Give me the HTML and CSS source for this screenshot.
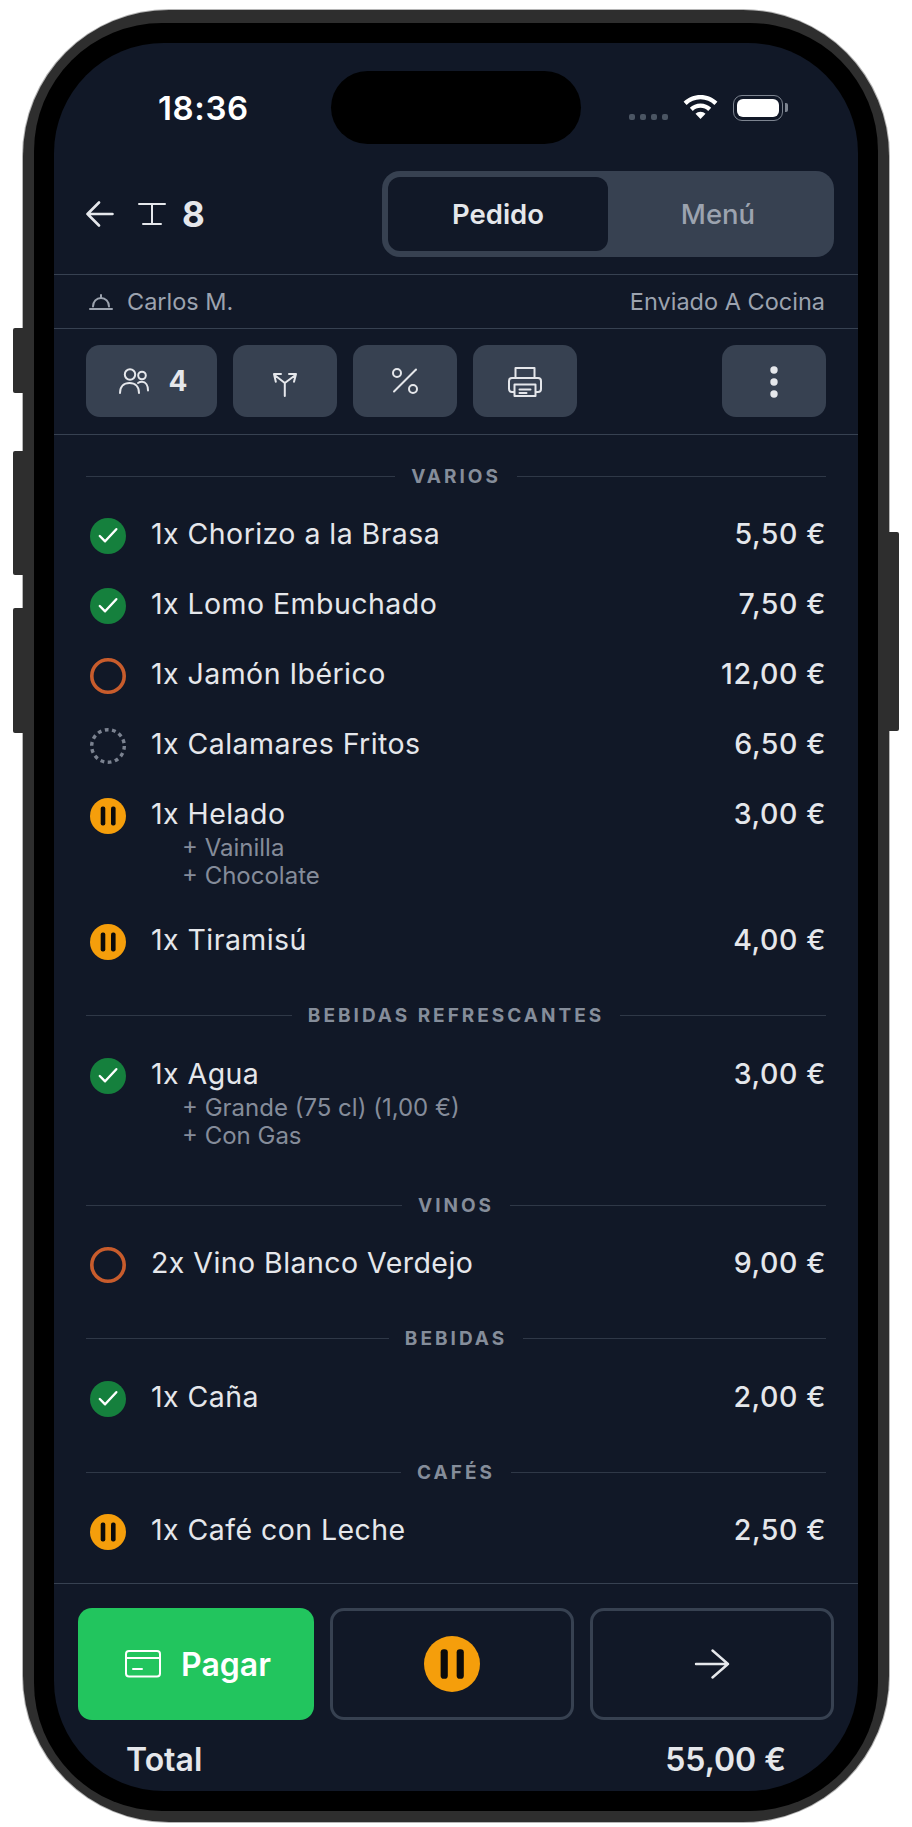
FILE: index.html
```html
<!DOCTYPE html>
<html lang="es">
<head>
    <meta charset="UTF-8">
    <title>Pedido mesa 8</title>
    <link rel="stylesheet" href="styles.css">
</head>
<body>

	<svg class="defs" width="0" height="0">
		<symbol id="st-done" viewBox="0 0 36 36">
			<circle cx="18" cy="18" r="18" fill="#15803d"/>
			<path d="M9.800 18l5.300 5.300L26.300 11.200" fill="none" stroke="#fff" stroke-width="2.400" stroke-linecap="round" stroke-linejoin="round"/>
		</symbol>
		<symbol id="st-sent" viewBox="0 0 36 36">
			<circle cx="18" cy="18" r="16.200" fill="none" stroke="#c85c2c" stroke-width="3.600"/>
		</symbol>
		<symbol id="st-wait" viewBox="0 0 36 36">
			<circle cx="18" cy="18" r="16.300" fill="none" stroke="#7b8290" stroke-width="3.400" stroke-dasharray="3.800 3.510"/>
		</symbol>
		<symbol id="st-hold" viewBox="0 0 36 36">
			<circle cx="18" cy="18" r="18" fill="#f59e0b"/>
			<rect x="10.700" y="8.500" width="4.600" height="19" rx="2" fill="#0b0b0b"/>
			<rect x="21" y="8.500" width="4.600" height="19" rx="2" fill="#0b0b0b"/>
		</symbol>
	</svg>

	<div class="phone">
		<span class="side-btn left b1"></span>
		<span class="side-btn left b2"></span>
		<span class="side-btn left b3"></span>
		<span class="side-btn right b4"></span>

		<div class="bezel">
		<div class="screen">
			<div class="island"></div>

			<div class="statusbar">
				<span class="time">18:36</span>
				<span class="status-icons">
					<span class="signal"><i></i><i></i><i></i><i></i></span>
					<svg class="wifi" width="35" height="26" viewBox="0 0 35 26">
						<path d="M17.500 0C11 0 5 2.500.6 6.700l3 3.200C7.200 6.400 12.100 4.300 17.500 4.300s10.300 2.100 13.900 5.600l3-3.200C30 2.500 24 0 17.500 0z" fill="#fff"/>
						<path d="M17.500 8.400c-4.100 0-7.900 1.600-10.700 4.300l3 3.200c2-1.900 4.700-3.100 7.700-3.100s5.700 1.200 7.700 3.100l3-3.200c-2.800-2.700-6.600-4.300-10.700-4.300z" fill="#fff"/>
						<path d="M17.500 16.800c-2 0-3.700.8-5 2l5 5.200 5-5.200c-1.300-1.200-3-2-5-2z" fill="#fff"/>
					</svg>
					<span class="battery"><i></i></span>
				</span>
			</div>

			<div class="topbar">
				<div class="table-info">
					<svg width="28" height="26" viewBox="0 0 28 26" class="ico">
						<path d="M1.500 13h25M13 1.500L1.500 13 13 24.500"/>
					</svg>
					<svg width="28" height="24" viewBox="0 0 28 24" class="ico thin table-ico">
						<path d="M1 2h26M14 2v20M5 22h18"/>
					</svg>
					<span class="table-no">8</span>
				</div>
				<div class="tabs">
					<div class="tab active">Pedido</div>
					<div class="tab">Menú</div>
				</div>
			</div>

			<div class="infobar">
				<span class="waiter">
					<svg width="24" height="16" viewBox="0 0 24 16" class="ico thin dim">
						<path d="M1 15h22M4 12.500C4 7.500 7.500 4 12 4s8 3.500 8 8.500M12 1v3"/>
					</svg>
					Carlos M.
				</span>
				<span>Enviado A Cocina</span>
			</div>

			<div class="toolbar">
				<button class="tool wide" type="button">
					<svg width="30" height="26" viewBox="0 0 30 26" class="ico thin">
						<circle cx="11" cy="6.500" r="5.200"/>
						<circle cx="23" cy="7.500" r="3.800"/>
						<path d="M1 25c0-6.500 4-10 9.500-10s9.500 3.500 9.500 10M19 15c1.200-.8 2.500-1.200 4-1.200 3.800 0 6 3.800 6 8.700"/>
					</svg>
					<span>4</span>
				</button>
				<button class="tool" type="button">
					<svg width="24" height="24" viewBox="0 0 24 24" class="ico thin fork">
						<path d="M11.800 23V10L1.500 2M11.800 10L22.500 2M8 1H1l1.800 7.700M16 1h7l-2 7.700"/>
					</svg>
				</button>
				<button class="tool" type="button">
					<svg width="28" height="28" viewBox="0 0 28 28" class="ico thin">
						<path d="M25 2.500L3 24.500"/>
						<circle cx="6" cy="6" r="4"/>
						<circle cx="22" cy="22" r="4"/>
					</svg>
				</button>
				<button class="tool" type="button">
					<svg width="34" height="30" viewBox="0 0 34 30" class="ico thin nudge">
						<path d="M7.500 11V1h19v10M6 25H4a3 3 0 0 1-3-3V14a3 3 0 0 1 3-3h26a3 3 0 0 1 3 3v8a3 3 0 0 1-3 3h-2"/>
						<path d="M6.500 17.500h21V29h-21zM11.500 22.500h11M11.500 26h7"/>
					</svg>
				</button>
				<button class="tool push" type="button">
					<svg width="8" height="32" viewBox="0 0 8 32" class="dots nudge">
						<circle cx="4" cy="4" r="3.700"/>
						<circle cx="4" cy="16" r="3.700"/>
						<circle cx="4" cy="28" r="3.700"/>
					</svg>
				</button>
			</div>

			<div class="order">
				<div class="section"><span>Varios</span></div>
				<div class="row"><svg class="state"><use href="#st-done"/></svg><div class="name">1x Chorizo a la Brasa</div><div class="price">5,50 €</div></div>
				<div class="row"><svg class="state"><use href="#st-done"/></svg><div class="name">1x Lomo Embuchado</div><div class="price">7,50 €</div></div>
				<div class="row"><svg class="state"><use href="#st-sent"/></svg><div class="name">1x Jamón Ibérico</div><div class="price">12,00 €</div></div>
				<div class="row"><svg class="state"><use href="#st-wait"/></svg><div class="name">1x Calamares Fritos</div><div class="price">6,50 €</div></div>
				<div class="row">
					<svg class="state"><use href="#st-hold"/></svg>
					<div class="name">1x Helado
						<div class="extras"><div>+ Vainilla</div><div>+ Chocolate</div></div>
					</div>
					<div class="price">3,00 €</div>
				</div>
				<div class="row"><svg class="state"><use href="#st-hold"/></svg><div class="name">1x Tiramisú</div><div class="price">4,00 €</div></div>

				<div class="section"><span>Bebidas Refrescantes</span></div>
				<div class="row">
					<svg class="state"><use href="#st-done"/></svg>
					<div class="name">1x Agua
						<div class="extras"><div>+ Grande (75 cl) (1,00 €)</div><div>+ Con Gas</div></div>
					</div>
					<div class="price">3,00 €</div>
				</div>

				<div class="section"><span>Vinos</span></div>
				<div class="row"><svg class="state"><use href="#st-sent"/></svg><div class="name">2x Vino Blanco Verdejo</div><div class="price">9,00 €</div></div>

				<div class="section"><span>Bebidas</span></div>
				<div class="row"><svg class="state"><use href="#st-done"/></svg><div class="name">1x Caña</div><div class="price">2,00 €</div></div>

				<div class="section"><span>Cafés</span></div>
				<div class="row"><svg class="state"><use href="#st-hold"/></svg><div class="name">1x Café con Leche</div><div class="price">2,50 €</div></div>
			</div>

			<div class="footer">
				<div class="actions">
					<button class="pay" type="button">
						<svg width="36" height="28" viewBox="0 0 36 28" class="ico thin white">
							<rect x="1" y="1" width="34" height="25.500" rx="3"/>
							<path d="M1 8h34M8 19h9"/>
						</svg>
						Pagar
					</button>
					<button class="ghost" type="button">
						<svg width="56" height="56" viewBox="0 0 36 36"><use href="#st-hold"/></svg>
					</button>
					<button class="ghost" type="button">
						<svg width="36" height="30" viewBox="0 0 36 30" class="ico light">
							<path d="M2 15h32M18.500 1.500L34 15 18.500 28.500"/>
						</svg>
					</button>
				</div>
				<div class="total"><span>Total</span><span>55,00 €</span></div>
			</div>
		</div>
		</div>
	</div>

</body>
</html>
```

FILE: styles.css
```css
:root {
	--bg: #111827;
	--line: #374151;
	--text: #e5e7eb;
	--muted: #9ca3af;
}
* {
	box-sizing: border-box;
}
body {
	margin: 0;
	padding: 10px 23px 5px;
	background: #fff;
	font-family: Inter, "Noto Sans", sans-serif;
	color: var(--text);
}
.defs {
	position: absolute;
}
.phone {
	position: relative;
	width: 866px;
	height: 1812px;
	padding: 13px 11px 11px;
	background: #2e2e2e;
	border-radius: 146px;
	box-shadow: 0 0 0 1px #b5b5b5;
}
.side-btn {
	position: absolute;
	width: 10px;
	background: #2e2e2e;
}
.side-btn.left {
	left: -10px;
	border-radius: 2px 0 0 2px;
}
.side-btn.right {
	right: -10px;
	border-radius: 0 2px 2px 0;
}
.b1 { top: 318px; height: 65px; }
.b2 { top: 441px; height: 124px; }
.b3 { top: 598px; height: 125px; }
.b4 { top: 522px; height: 199px; }

.bezel {
	height: 100%;
	padding: 20px;
	background: #000;
	border-radius: 128px;
}
.screen {
	position: relative;
	display: flex;
	flex-direction: column;
	height: 100%;
	background: var(--bg);
	border-radius: 110px;
	overflow: hidden;
}
.screen > div {
	flex: none;
}
.island {
	position: absolute;
	top: 28px;
	left: 277px;
	width: 250px;
	height: 73px;
	background: #000;
	border-radius: 37px;
}

.statusbar {
	display: flex;
	justify-content: space-between;
	align-items: flex-start;
	height: 128px;
	padding: 45px 75px 0 104px;
	color: #fff;
}
.time {
	font-size: 33px;
	font-weight: 600;
	line-height: 40px;
	letter-spacing: 0.6px;
}
.status-icons {
	display: flex;
	align-items: flex-start;
	padding-top: 7px;
}
.signal {
	display: flex;
	gap: 5px;
	margin: 19px 15px 0 0;
}
.signal i {
	width: 6px;
	height: 6px;
	border-radius: 2px;
	background: #4b5563;
}
.battery {
	position: relative;
	width: 50px;
	height: 26px;
	margin-left: 15px;
	padding: 3px;
	border: 1.500px solid #7d8490;
	border-radius: 9px;
}
.battery i {
	display: block;
	height: 100%;
	background: #fff;
	border-radius: 6px;
}
.battery::after {
	content: "";
	position: absolute;
	right: -6px;
	top: 7px;
	width: 3px;
	height: 9px;
	background: #7d8490;
	border-radius: 0 2px 2px 0;
}

.ico {
	fill: none;
	stroke: var(--text);
	stroke-width: 2.600;
	stroke-linecap: round;
	stroke-linejoin: round;
}
.ico.thin {
	stroke-width: 2;
}
.ico.dim {
	stroke: var(--muted);
}
.ico.white {
	stroke: #fff;
}
.ico.light {
	stroke-width: 2.400;
}
.fork {
	margin-top: 7px;
}
.nudge {
	margin-top: 2px;
}

.topbar {
	display: flex;
	justify-content: space-between;
	align-items: flex-start;
	height: 104px;
	padding: 0 24px 0 32px;
	border-bottom: 1px solid var(--line);
}
.table-info {
	display: flex;
	align-items: center;
	height: 86px;
}
.table-ico {
	margin-left: 24px;
}
.table-no {
	margin-left: 16px;
	font-size: 35px;
	font-weight: 700;
}
.tabs {
	display: grid;
	grid-template-columns: 220px 220px;
	width: 452px;
	height: 86px;
	padding: 6px;
	background: var(--line);
	border-radius: 18px;
}
.tab {
	display: flex;
	align-items: center;
	justify-content: center;
	font-size: 27.500px;
	font-weight: 500;
	color: var(--muted);
	border-radius: 12px;
}
.tab.active {
	background: var(--bg);
	color: var(--text);
	font-weight: 600;
}

.infobar {
	display: flex;
	justify-content: space-between;
	align-items: center;
	height: 54px;
	padding: 0 33px 0 35px;
	border-bottom: 1px solid var(--line);
	font-size: 23.500px;
	color: var(--muted);
}
.waiter {
	display: flex;
	align-items: center;
	gap: 14px;
}

.toolbar {
	display: flex;
	gap: 16px;
	height: 106px;
	padding: 16px 32px 0;
	border-bottom: 1px solid var(--line);
}
.tool {
	display: flex;
	align-items: center;
	justify-content: center;
	gap: 20px;
	width: 104px;
	height: 72px;
	border: 0;
	padding: 0;
	background: var(--line);
	border-radius: 14px;
	color: var(--text);
	font: 700 28px Inter, sans-serif;
}
.tool.wide {
	width: 131px;
	padding-left: 3px;
}
.tool.push {
	margin-left: auto;
}
.dots {
	fill: var(--text);
}

.screen > .order {
	flex: 1;
	padding: 29px 32px 0;
}
.section {
	display: flex;
	align-items: center;
	gap: 16px;
	height: 24px;
	margin: 43.500px 0 28px;
	font-size: 19px;
	font-weight: 700;
	letter-spacing: 3px;
	text-transform: uppercase;
	color: #858d9a;
}
.section:first-child {
	margin-top: 0;
}
.section::before,
.section::after {
	content: "";
	flex: 1;
	height: 1px;
	background: #2f3847;
}
.row {
	display: flex;
	align-items: flex-start;
	margin-bottom: 32px;
	font-size: 28.500px;
	line-height: 36px;
	letter-spacing: 0.45px;
}
.row:has(+ .section),
.row:last-child {
	margin-bottom: 0;
}
.state {
	flex: none;
	width: 36px;
	height: 36px;
	margin: 2px 25px 0 4px;
}
.name {
	flex: 1;
}
.price {
	font-weight: 500;
	letter-spacing: 0.6px;
}
.extras {
	margin: 2px 0 0 31px;
	font-size: 24px;
	line-height: 28px;
	letter-spacing: 0;
	color: #858c9a;
}

.footer {
	border-top: 1px solid var(--line);
	padding: 24px 24px 0;
	height: 208px;
}
.actions {
	display: grid;
	grid-template-columns: 236px 244px 244px;
	gap: 16px;
	height: 112px;
}
.pay,
.ghost {
	display: flex;
	align-items: center;
	justify-content: center;
	border-radius: 14px;
	padding: 0;
}
.pay {
	gap: 20px;
	border: 0;
	padding-left: 4px;
	background: #22c55e;
	color: #fff;
	font: 600 32px Inter, sans-serif;
}
.ghost {
	background: transparent;
	border: 3px solid var(--line);
}
.total {
	display: flex;
	justify-content: space-between;
	margin-top: 20px;
	padding: 0 48px;
	font-size: 32px;
	font-weight: 600;
	line-height: 40px;
}
```
